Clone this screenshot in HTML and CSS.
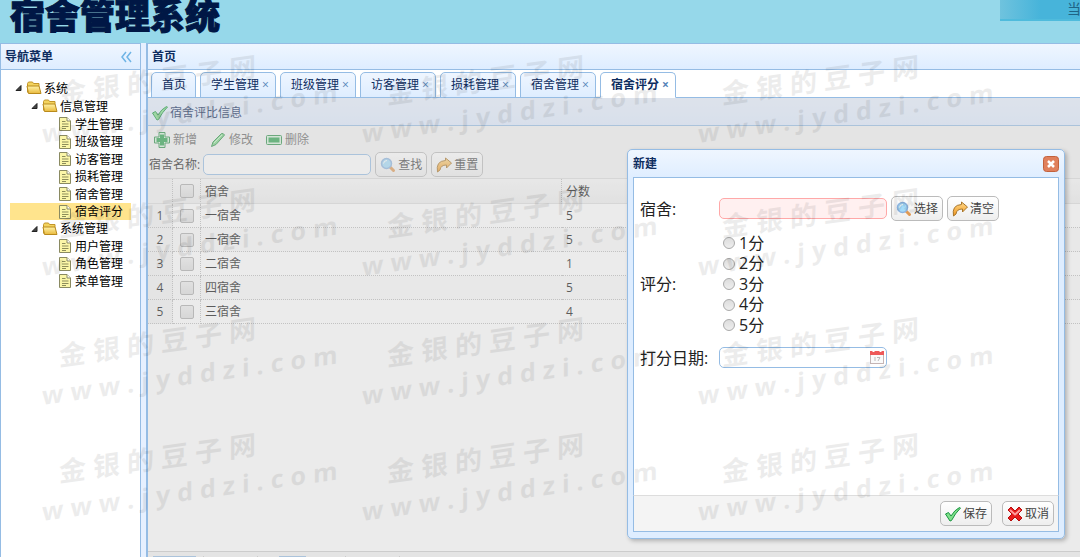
FILE: index.html
```html
<!DOCTYPE html>
<html lang="zh-CN">
<head>
    <meta charset="UTF-8">
    <meta name="viewport" content="width=device-width, initial-scale=1.0">
    <title>宿舍管理系统</title>
    <link rel="stylesheet" href="styles.css">
</head>
<body>
    <!-- shared icons -->
    <svg class="icon-defs" width="0" height="0">
        <defs>
            <linearGradient id="gFolder" x1="0" y1="0" x2="0" y2="1">
                <stop offset="0" stop-color="#fff3a8"/>
                <stop offset="1" stop-color="#e9b93c"/>
            </linearGradient>
            <linearGradient id="gArrow" x1="0" y1="0" x2="0" y2="1">
                <stop offset="0" stop-color="#ffd98a"/>
                <stop offset="1" stop-color="#f0961e"/>
            </linearGradient>
        </defs>
        <symbol id="folder" viewBox="0 0 16 16">
            <path d="M1.500 12.500V3.500l1-1.500h4l1 1.500h5.500v3" fill="#f3d35e" stroke="#c2952a"/>
            <path d="M2.500 13.500L1 6h12l2 7.500z" fill="url(#gFolder)" stroke="#b98a1c" stroke-linejoin="round"/>
        </symbol>
        <symbol id="file" viewBox="0 0 16 16">
            <path d="M2.500 1.500h7.500l3.500 3.500v9.500h-11z" fill="#fbf6a8" stroke="#8a8a62"/>
            <path d="M10 1.500V5h3.500" fill="#fff" stroke="#8a8a62"/>
            <path d="M5 5.500h3.500M5 8h6.500M5 10.500h6.500M5 12.500h4" stroke="#8d8d5a"/>
        </symbol>
        <symbol id="ok" viewBox="0 0 16 16">
            <path d="M.5 8l3-1.500 2.500 3.500Q9.500 4 14.500 1.500l1 .5Q10 7.500 6.500 14.500l-1.500.5z" fill="#7fe08a" stroke="#189440" stroke-linejoin="round"/>
        </symbol>
        <symbol id="add" viewBox="0 0 16 16">
            <path d="M5 .5h6V5h4.500v6H11v4.500H5V11H.5V5H5z" fill="#d8f3dc" stroke="#2c8f48" stroke-linejoin="round"/>
            <path d="M8 2.500v11M2.500 8h11" stroke="#2ba24e" stroke-width="4"/>
        </symbol>
        <symbol id="edit" viewBox="0 0 16 16">
            <path d="M1.500 14.500l1.500-4.500 8.500-8.500q2-.5 3 1.500L6 12.500z" fill="#7bd886" stroke="#2a8f45" stroke-linejoin="round"/>
            <path d="M4 11l8-8" stroke="#c5f2ca"/>
        </symbol>
        <symbol id="remove" viewBox="0 0 16 16">
            <rect x=".5" y="3.500" width="15" height="9" rx="1" fill="#d8f3dc" stroke="#2c8f48"/>
            <rect x="2.500" y="5.500" width="11" height="5" fill="#2ba24e"/>
        </symbol>
        <symbol id="search" viewBox="0 0 16 16">
            <path d="M10 10l3.500 3.500" stroke="#e09a55" stroke-width="3" stroke-linecap="round"/>
            <circle cx="6.500" cy="6.500" r="5" fill="#a4dcfa" stroke="#8db4e0" stroke-width="1.500"/>
            <path d="M3.500 6.500q.5-3 3.500-3" fill="none" stroke="#fff"/>
        </symbol>
        <symbol id="redo" viewBox="0 0 16 16">
            <path d="M1.500 15Q-.5 4 9.500 3.500V1l6 5-5 5V8Q4.500 8 4 13z" fill="url(#gArrow)" stroke="#a8762c" stroke-linejoin="round"/>
        </symbol>
        <symbol id="cancel" viewBox="0 0 16 16">
            <path d="M1 4l3-3 4 4 4-4 3 3-4 4 4 4-3 3-4-4-4 4-3-3 4-4z" fill="#e81c1c" stroke="#b80c0c" stroke-linejoin="round"/>
            <path d="M3 4l5 4.500L13 4" fill="none" stroke="#ff9d9d" stroke-width="2"/>
        </symbol>
        <symbol id="calendar" viewBox="0 0 16 16">
            <rect x="1.500" y="2.500" width="13" height="12" fill="#fbfbfb" stroke="#c5b5b5"/>
            <path d="M1 2h14v4H1z" fill="#ee5a5a"/>
            <path d="M4.500 0v3M11.500 0v3" stroke="#fff" stroke-width="2"/>
            <path d="M6 8v4M8 8.500h3l-2 3.500" fill="none" stroke="#bbb"/>
        </symbol>
        <symbol id="close" viewBox="0 0 16 16">
            <rect x=".5" y=".5" width="15" height="15" rx="3" fill="#e0805c" stroke="#c2613c"/>
            <path d="M5 5l6 6M11 5l-6 6" stroke="#fff" stroke-width="2.500"/>
        </symbol>
        <symbol id="arrow" viewBox="0 0 16 16">
            <path d="M11 5.500v5H6z" fill="#444" stroke="#222" stroke-linejoin="round"/>
        </symbol>
    </svg>

    <header class="banner">
        <h1>宿舍管理系统</h1>
        <div class="user-box">当</div>
    </header>

    <div class="layout">
        <aside class="west">
            <div class="panel-header">
                <span>导航菜单</span>
                <button class="collapse" type="button" aria-label="collapse">
                    <svg width="12" height="12" viewBox="0 0 12 12"><path d="M6 1L2 6l4 5M11 1L7 6l4 5" fill="none" stroke="#6fb4e6" stroke-width="1.500"/></svg>
                </button>
            </div>
            <ul class="tree">
                <li>
                    <div class="node"><svg><use href="#arrow"/></svg><svg><use href="#folder"/></svg><span>系统</span></div>
                    <ul>
                        <li>
                            <div class="node"><svg><use href="#arrow"/></svg><svg><use href="#folder"/></svg><span>信息管理</span></div>
                            <ul>
                                <li><div class="node leaf"><svg><use href="#file"/></svg><span>学生管理</span></div></li>
                                <li><div class="node leaf"><svg><use href="#file"/></svg><span>班级管理</span></div></li>
                                <li><div class="node leaf"><svg><use href="#file"/></svg><span>访客管理</span></div></li>
                                <li><div class="node leaf"><svg><use href="#file"/></svg><span>损耗管理</span></div></li>
                                <li><div class="node leaf"><svg><use href="#file"/></svg><span>宿舍管理</span></div></li>
                                <li><div class="node leaf selected"><svg><use href="#file"/></svg><span>宿舍评分</span></div></li>
                            </ul>
                        </li>
                        <li>
                            <div class="node"><svg><use href="#arrow"/></svg><svg><use href="#folder"/></svg><span>系统管理</span></div>
                            <ul>
                                <li><div class="node leaf"><svg><use href="#file"/></svg><span>用户管理</span></div></li>
                                <li><div class="node leaf"><svg><use href="#file"/></svg><span>角色管理</span></div></li>
                                <li><div class="node leaf"><svg><use href="#file"/></svg><span>菜单管理</span></div></li>
                            </ul>
                        </li>
                    </ul>
                </li>
            </ul>
        </aside>

        <main class="center">
            <div class="panel-header"><span>首页</span></div>
            <nav class="tabs">
                <a class="tab" href="#">首页</a>
                <a class="tab" href="#">学生管理<i>×</i></a>
                <a class="tab" href="#">班级管理<i>×</i></a>
                <a class="tab" href="#">访客管理<i>×</i></a>
                <a class="tab" href="#">损耗管理<i>×</i></a>
                <a class="tab" href="#">宿舍管理<i>×</i></a>
                <a class="tab active" href="#">宿舍评分<i>×</i></a>
            </nav>
            <section class="grid-panel">
                <div class="grid-title"><svg><use href="#ok"/></svg><span>宿舍评比信息</span></div>
                <div class="toolbar">
                    <div class="tools">
                        <button class="plain" type="button"><svg><use href="#add"/></svg>新增</button>
                        <button class="plain" type="button"><svg><use href="#edit"/></svg>修改</button>
                        <button class="plain" type="button"><svg><use href="#remove"/></svg>删除</button>
                    </div>
                    <div class="search">
                        <label for="dormName">宿舍名称:</label>
                        <input class="textbox" type="text" id="dormName">
                        <button class="btn" type="button"><svg><use href="#search"/></svg>查找</button>
                        <button class="btn" type="button"><svg><use href="#redo"/></svg>重置</button>
                    </div>
                </div>
                <table class="datagrid">
                    <thead>
                        <tr><th class="num"></th><th class="check"><input type="checkbox" aria-label="全选"></th><th class="name">宿舍</th><th>分数</th></tr>
                    </thead>
                    <tbody>
                        <tr><td class="num">1</td><td class="check"><input type="checkbox" aria-label="1"></td><td>一宿舍</td><td>5</td></tr>
                        <tr><td class="num">2</td><td class="check"><input type="checkbox" aria-label="2"></td><td>一宿舍</td><td>5</td></tr>
                        <tr><td class="num">3</td><td class="check"><input type="checkbox" aria-label="3"></td><td>二宿舍</td><td>1</td></tr>
                        <tr><td class="num">4</td><td class="check"><input type="checkbox" aria-label="4"></td><td>四宿舍</td><td>5</td></tr>
                        <tr><td class="num">5</td><td class="check"><input type="checkbox" aria-label="5"></td><td>三宿舍</td><td>4</td></tr>
                    </tbody>
                </table>
                <div class="pager">
                    <select aria-label="每页条数"></select>
                    <span class="pager-group"></span>
                    <input type="text" aria-label="页码">
                    <span class="pager-group"></span>
                </div>
                <div class="mask"></div>
            </section>
        </main>
    </div>

    <div class="dialog" role="dialog" aria-label="新建">
        <div class="dialog-header">
            <span>新建</span>
            <button type="button" aria-label="关闭"><svg><use href="#close"/></svg></button>
        </div>
        <form class="dialog-body">
            <div class="field">
                <label for="dorm">宿舍:</label>
                <input class="textbox invalid" type="text" id="dorm">
                <button class="btn" type="button"><svg><use href="#search"/></svg>选择</button>
                <button class="btn" type="button"><svg><use href="#redo"/></svg>清空</button>
            </div>
            <div class="field" role="radiogroup" aria-labelledby="scoreLabel">
                <span class="label" id="scoreLabel">评分:</span>
                <div class="radios">
                    <label><input type="radio" name="score" value="1">1分</label>
                    <label><input type="radio" name="score" value="2">2分</label>
                    <label><input type="radio" name="score" value="3">3分</label>
                    <label><input type="radio" name="score" value="4">4分</label>
                    <label><input type="radio" name="score" value="5">5分</label>
                </div>
            </div>
            <div class="field">
                <label for="scoreDate">打分日期:</label>
                <div class="datebox">
                    <input class="textbox" type="text" id="scoreDate">
                    <svg><use href="#calendar"/></svg>
                </div>
            </div>
        </form>
        <div class="dialog-footer">
            <button class="btn" type="button"><svg><use href="#ok"/></svg>保存</button>
            <button class="btn" type="button"><svg><use href="#cancel"/></svg>取消</button>
        </div>
    </div>

    <svg class="watermark" aria-hidden="true">
        <defs>
            <text id="markName" class="mark-name" transform="skewY(-8)">金银的豆子网</text>
            <text id="markUrl" class="mark-url" transform="skewY(-8)">www.jyddzi.com</text>
        </defs>
        <use href="#markName" x="59" y="104"/>
        <use href="#markName" x="387" y="104"/>
        <use href="#markName" x="722" y="104"/>
        <use href="#markUrl" x="42" y="143"/>
        <use href="#markUrl" x="362" y="143"/>
        <use href="#markUrl" x="698" y="143"/>
        <use href="#markName" x="59" y="237"/>
        <use href="#markName" x="387" y="237"/>
        <use href="#markName" x="722" y="237"/>
        <use href="#markUrl" x="42" y="276"/>
        <use href="#markUrl" x="362" y="276"/>
        <use href="#markUrl" x="698" y="276"/>
        <use href="#markName" x="59" y="366"/>
        <use href="#markName" x="387" y="366"/>
        <use href="#markName" x="722" y="366"/>
        <use href="#markUrl" x="42" y="405"/>
        <use href="#markUrl" x="362" y="405"/>
        <use href="#markUrl" x="698" y="405"/>
        <use href="#markName" x="59" y="482"/>
        <use href="#markName" x="387" y="482"/>
        <use href="#markName" x="722" y="482"/>
        <use href="#markUrl" x="42" y="521"/>
        <use href="#markUrl" x="362" y="521"/>
        <use href="#markUrl" x="698" y="521"/>
    </svg>
</body>
</html>
```
FILE: styles.css
```css
* {
    margin: 0;
    padding: 0;
    box-sizing: border-box;
}
body {
    font-family: "Open Sans", "Noto Sans CJK SC", sans-serif;
    font-size: 12px;
    line-height: 16px;
    color: #222;
    height: 100vh;
    display: flex;
    flex-direction: column;
    overflow: hidden;
    position: relative;
    background: #e6f0ff;
}
button, input, select {
    font: inherit;
    color: inherit;
}
button {
    cursor: pointer;
}
ul {
    list-style: none;
}
svg {
    width: 16px;
    height: 16px;
    flex: none;
}
.icon-defs {
    position: absolute;
    width: 0;
    height: 0;
}

/* banner */
.banner {
    display: flex;
    justify-content: space-between;
    align-items: flex-start;
    height: 43px;
    flex: none;
    padding-left: 10px;
    background: #96d8ea;
}
.banner h1 {
    font-size: 35px;
    line-height: 32px;
    font-weight: 900;
    color: #001745;
    -webkit-text-stroke: 1px #001745;
}
.user-box {
    width: 80px;
    height: 21px;
    padding-left: 67px;
    font-size: 14px;
    line-height: 18px;
    white-space: nowrap;
    color: #1f6486;
    background: linear-gradient(to right, #6fc3de, #47b4da 40px);
    border-bottom: 2px solid #4fbbdc;
}

/* layout */
.layout {
    flex: 1;
    min-height: 0;
    display: flex;
    gap: 5px;
}
.west {
    width: 141px;
    flex: none;
    background: #fff;
    border: 1px solid #95bce4;
    border-bottom: none;
}
.center {
    flex: 1;
    min-width: 0;
    display: flex;
    flex-direction: column;
    background: #fff;
    border-top: 1px solid #95bce4;
    border-left: 2px solid #95bce4;
}
.panel-header {
    display: flex;
    justify-content: space-between;
    align-items: center;
    height: 26px;
    flex: none;
    padding: 1px 8px 0 4px;
    font-weight: bold;
    color: #0e2d5f;
    background: linear-gradient(#eff6ff, #deedff);
    border-bottom: 1px solid #95bce4;
}
.collapse {
    display: flex;
    border: none;
    background: none;
}
.collapse svg {
    width: 12px;
    height: 12px;
}

/* tree */
.tree {
    padding: 9px;
    color: #000;
}
.node {
    display: flex;
    align-items: center;
    height: 17px;
    line-height: 17px;
}
li:nth-child(odd) > .node {
    height: 18px;
}
.node span {
    margin-left: 2px;
}
.tree ul .node {
    padding-left: 16px;
}
.tree ul .leaf {
    padding-left: 47px;
}
.node.selected {
    background: #ffe48d;
}

/* tabs */
.tabs {
    display: flex;
    gap: 4px;
    height: 28px;
    flex: none;
    padding: 2px 3px 0;
    border-bottom: 1px solid #95bce4;
}
.tab {
    display: flex;
    align-items: center;
    gap: 3px;
    height: 26px;
    padding: 0 5px 0 10px;
    color: #0e2d5f;
    text-decoration: none;
    background: linear-gradient(#eff6ff, #deedff);
    border: 1px solid #95bce4;
    border-radius: 5px 5px 0 0;
}
.tab:first-child {
    padding-right: 9px;
}
.tab i {
    font-style: normal;
    width: 8px;
    color: #5583b8;
}
.tab.active {
    font-weight: bold;
    background: #fff;
    border-bottom-color: #fff;
}

/* data grid */
.grid-panel {
    flex: 1;
    display: flex;
    flex-direction: column;
    margin-bottom: -24px;
    position: relative;
}
.grid-title {
    display: flex;
    align-items: center;
    height: 28px;
    padding: 2px 0 0 4px;
    gap: 2px;
    color: #0e2d5f;
    background: linear-gradient(#e8f1ff, #e0ecff);
    border-bottom: 1px solid #95bce4;
}
.toolbar {
    background: #f4f4f4;
    border-bottom: 1px solid #ddd;
    padding: 2px 2px 0 1px;
    height: 53px;
}
.tools {
    display: flex;
    gap: 13px;
    height: 24px;
    padding-left: 5px;
}
.plain {
    display: flex;
    align-items: center;
    gap: 3px;
    border: none;
    background: none;
    color: #666;
}
.search {
    display: flex;
    align-items: center;
    gap: 4px;
}
.search label {
    margin-right: -1px;
}
.textbox {
    appearance: none;
    width: 168px;
    height: 21px;
    padding: 0 4px;
    background: #fff;
    border: 1px solid #95bce4;
    border-radius: 5px;
    outline: none;
}
.textbox.invalid {
    background: #fff0f0;
    border-color: #ffa8a8;
}
.btn {
    display: flex;
    align-items: center;
    gap: 2px;
    height: 25px;
    padding: 0 4px;
    color: #444;
    background: linear-gradient(#fff, #eee);
    border: 1px solid #bbb;
    border-radius: 5px;
}
.datagrid {
    width: 100%;
    border-collapse: separate;
    border-spacing: 0;
    table-layout: fixed;
    color: #111;
}
.datagrid th, .datagrid td {
    height: 24px;
    padding: 1px 0 0 4px;
    font-weight: normal;
    text-align: left;
    border-bottom: 1px dotted #bbb;
}
.datagrid th {
    height: 25px;
    background: linear-gradient(#f9f9f9, #efefef);
    border-right: 1px dotted #bbb;
    border-bottom: 1px solid #ddd;
}
.datagrid th:last-child {
    border-right: none;
}
.datagrid tbody tr:nth-child(even) {
    background: #fafafa;
}
.datagrid .num {
    width: 25px;
    padding: 1px 0 0;
    text-align: center;
    background: #f4f4f4;
    border-right: 1px dotted #bbb;
}
.datagrid .check {
    width: 28px;
    padding: 0;
    text-align: center;
    border-right: 1px dotted #bbb;
}
.datagrid .name {
    width: 361px;
}
.check input {
    appearance: none;
    display: block;
    width: 14px;
    height: 14px;
    margin: 0 auto;
    background: linear-gradient(#eee, #ddd);
    border: 1px solid #aaa;
    border-radius: 2px;
}
.pager {
    display: flex;
    gap: 7px;
    height: 30px;
    margin-top: auto;
    padding: 4px 5px;
    background: #f4f4f4;
    border-top: 1px solid #ccc;
}
.pager select {
    appearance: none;
    width: 43px;
    border: 1px solid #95bce4;
}
.pager input {
    width: 27px;
    margin: 0 32px 0 14px;
    border: 1px solid #95bce4;
}
.pager-group {
    width: 55px;
    border: solid #ccc;
    border-width: 0 1px;
}
.mask {
    position: absolute;
    inset: 0;
    background: #ccc;
    opacity: 0.4;
}

/* dialog */
.dialog {
    position: absolute;
    top: 149px;
    right: 15px;
    width: 438px;
    padding: 0 5px 6px;
    background: linear-gradient(#eff6ff, #deedff 30px);
    border: 1px solid #95bce4;
    border-radius: 5px;
    box-shadow: 2px 2px 4px rgba(0, 0, 0, 0.25);
}
.dialog-header {
    display: flex;
    justify-content: space-between;
    align-items: center;
    height: 27px;
    font-weight: bold;
    color: #0e2d5f;
}
.dialog-header button {
    display: flex;
    border: none;
    background: none;
}
.dialog-body {
    height: 318px;
    padding: 18px 6px;
    background: #fff;
    border: 1px solid #95bce4;
    border-bottom: none;
}
.field {
    display: flex;
    align-items: center;
    gap: 4px;
}
.field > label, .field > .label {
    width: 75px;
    font-size: 16px;
}
.radios {
    display: flex;
    flex-direction: column;
    padding: 12px 4px;
    font-size: 16px;
    line-height: 20px;
}
.radios label {
    display: flex;
    align-items: center;
    gap: 4px;
}
.radios label:nth-child(even) {
    line-height: 21px;
}
.radios input {
    appearance: none;
    width: 12px;
    height: 12px;
    background: linear-gradient(#ddd, #eee);
    border: 1px solid #aaa;
    border-radius: 50%;
}
.datebox {
    position: relative;
    display: flex;
}
.datebox svg {
    position: absolute;
    right: 2px;
    top: 2px;
}
.dialog-footer {
    display: flex;
    justify-content: flex-end;
    gap: 10px;
    padding: 5px 4px;
    background: #f4f4f4;
    border: 1px solid #95bce4;
    border-top-color: #ddd;
}

/* watermark */
.watermark {
    position: absolute;
    inset: 0;
    width: 100%;
    height: 100%;
    pointer-events: none;
    fill: #000;
    opacity: 0.07;
    font-weight: bold;
}
.mark-name {
    font-size: 27px;
    letter-spacing: 7px;
}
.mark-url {
    font-size: 25px;
    letter-spacing: 7px;
}
```
